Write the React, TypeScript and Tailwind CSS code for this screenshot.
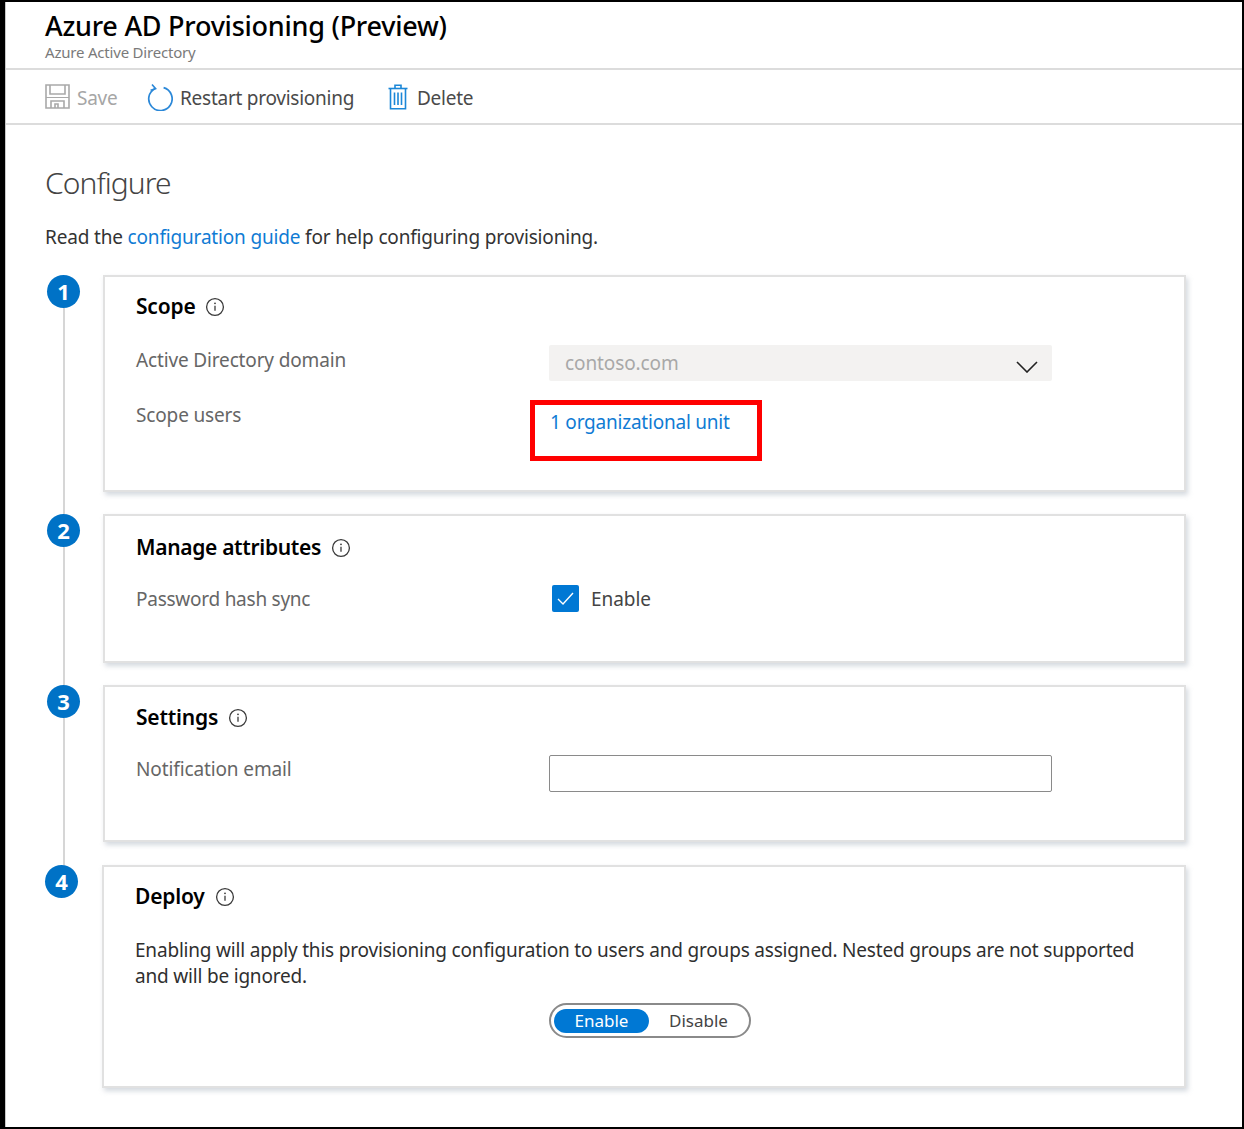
import React from "react";

const InfoIcon = () => (
  <svg width="20" height="20" viewBox="0 0 20 20" fill="none" className="shrink-0">
    <circle cx="10" cy="10" r="8.4" stroke="#3a3a3a" strokeWidth="1.3" />
    <path d="M10 8.8v5" stroke="#3a3a3a" strokeWidth="1.3" />
    <circle cx="10" cy="6.3" r="0.9" fill="#3a3a3a" />
  </svg>
);

const SaveIcon = () => (
  <svg width="25" height="25" viewBox="0 0 25 25" fill="none" stroke="#a9a9a9" strokeWidth="1.6">
    <path d="M1 1h23v23H1z" />
    <path d="M5 1v9h15V1" />
    <path d="M1 13.5h23" strokeWidth="1" />
    <path d="M6 24v-7h13v7" />
    <path d="M10 24v-4h3v4" />
  </svg>
);

const RestartIcon = () => (
  <svg width="26" height="28" viewBox="0 0 26 28" fill="none" stroke="#2b88d8" strokeWidth="1.7">
    <path d="M8.2 5.4A11.7 11.7 0 1 0 16.6 4.6" />
    <path d="M5 1.5l3.6 4.2-5 1.6" strokeWidth="1.6" />
  </svg>
);

const TrashIcon = () => (
  <svg width="20" height="26" viewBox="0 0 20 26" fill="none" stroke="#1b87d8" strokeWidth="1.6">
    <path d="M0.5 4.5h19" />
    <path d="M7 4.5V1.2h6v3.3" />
    <path d="M2.5 4.5v20.3h15V4.5" />
    <path d="M6.5 8.5v12.5M10 8.5v12.5M13.5 8.5v12.5" />
  </svg>
);

const Step = ({
  n,
  title,
  last,
  circleClass,
  cardClass,
  gapClass,
  headClass,
  titleClass,
  children,
}: {
  n: number;
  title: string;
  last?: boolean;
  circleClass: string;
  cardClass: string;
  gapClass: string;
  headClass: string;
  titleClass: string;
  children: React.ReactNode;
}) => (
  <div className="flex">
    <div className={`flex flex-col items-center w-[33px] shrink-0 ${circleClass}`}>
      <div className="w-[33px] h-[33px] rounded-full bg-[#0072c6] text-white font-bold text-[22px] leading-[32px] text-center">
        {n}
      </div>
      {!last && <div className="flex-1 w-[2px] bg-[#d6d6d6]" />}
    </div>
    <div className={`flex-1 ${gapClass}`}>
      <div className={`bg-white border-2 border-[#e1e1e1] shadow-[2px_3px_5px_rgba(160,170,185,0.45)] pl-[31px] ${cardClass}`}>
        <div className={`flex items-center gap-[10px] h-[32px] ${headClass}`}>
          <h2 className={`text-[21px] font-semibold text-black ${titleClass}`}>{title}</h2>
          <InfoIcon />
        </div>
        {children}
      </div>
    </div>
  </div>
);

export default function App() {
  return (
    <div
      className="h-[1129px] bg-white border-t-2 border-b-2 border-r-2 border-l-[5px] border-black overflow-hidden"
      style={{ fontFamily: '"Noto Sans", "Open Sans", sans-serif' }}
    >
      <div className="h-full border-l border-[#c8c8c8]">
        {/* Header */}
        <div className="h-[68px] border-b-2 border-[#dcdcdc] pl-[39px] pt-[5px]">
          <h1 className="text-[27px] leading-[37px] font-medium text-black tracking-[-0.25px]">
            Azure AD Provisioning (Preview)
          </h1>
          <div className="text-[15px] leading-[16px] text-[#7a7a7a] tracking-[-0.2px]">Azure Active Directory</div>
        </div>

        {/* Toolbar */}
        <div className="h-[55px] border-b-2 border-[#dcdcdc] pl-[39px] flex items-center text-[19px] tracking-[-0.25px]">
          <div className="flex items-center gap-[7px] text-[#a6a6a6] w-[102px]">
            <SaveIcon />
            <span className="mt-[4px]">Save</span>
          </div>
          <div className="flex items-center gap-[7px] text-[#4a4a4a] w-[241px]">
            <RestartIcon />
            <span className="mt-[4px]">Restart provisioning</span>
          </div>
          <div className="flex items-center gap-[9px] text-[#4a4a4a]">
            <TrashIcon />
            <span className="mt-[4px]">Delete</span>
          </div>
        </div>

        {/* Content */}
        <div className="pl-[39px] pr-[56px]">
          <h2 className="text-[30px] leading-[40px] font-light text-[#444444] mt-[38px] tracking-[-0.95px]">Configure</h2>
          <p className="text-[19px] leading-[28px] text-[#333333] mt-[20px] mb-[24px] tracking-[-0.17px]">
            Read the <a className="text-[#0f7bd4]">configuration guide</a> for help configuring provisioning.
          </p>

          <div className="ml-px">
            <Step
              n={1}
              title="Scope"
              circleClass="ml-[1px]"
              cardClass="ml-[23px] h-[217px]"
              gapClass="pb-[22px]"
              headClass="mt-[14px]"
              titleClass="tracking-[-0.2px]"
            >
              <div className="grid grid-cols-[413px_503px] mt-[22px]">
                <div className="text-[19px] leading-[28px] text-[#666666] tracking-[-0.15px] pt-[1px]">Active Directory domain</div>
                <div className="h-[36px] bg-[#f3f2f1] rounded-[2px] flex items-center justify-between pl-[16px] pr-[14px] text-[19px] text-[#a8a8a8] tracking-[-0.1px]">
                  <span className="mt-[1px]">contoso.com</span>
                  <svg width="22" height="12" viewBox="0 0 22 12" fill="none" stroke="#222222" strokeWidth="1.6" className="mt-[8px]">
                    <path d="M1 1l10 10L21 1" />
                  </svg>
                </div>
                <div className="text-[19px] leading-[28px] text-[#666666] tracking-[-0.15px] mt-[20px]">Scope users</div>
                <div className="mt-[19px] -ml-[19px] w-[232px] h-[61px] border-[5px] border-[#ff0000] pl-[15px] pt-[3px] text-[19px] leading-[28px] text-[#0f7bd4] tracking-[-0.22px]">
                  1 organizational unit
                </div>
              </div>
            </Step>

            <Step
              n={2}
              title="Manage attributes"
              circleClass="ml-[1px]"
              cardClass="ml-[23px] h-[149px]"
              gapClass="pb-[22px]"
              headClass="mt-[16px]"
              titleClass="tracking-[-0.32px]"
            >
              <div className="grid grid-cols-[416px_1fr] mt-[20px]">
                <div className="text-[19px] leading-[28px] text-[#666666] tracking-[-0.25px] pt-[1px]">Password hash sync</div>
                <div className="flex items-center gap-[12px] text-[19px] text-[#444444] tracking-[-0.05px]">
                  <div className="w-[27px] h-[27px] bg-[#0078d4] rounded-[2px] flex items-center justify-center">
                    <svg width="17" height="13" viewBox="0 0 17 13" fill="none" stroke="#ffffff" strokeWidth="1.4">
                      <path d="M1 7l5 5L16 1" />
                    </svg>
                  </div>
                  <span className="mt-[1px]">Enable</span>
                </div>
              </div>
            </Step>

            <Step
              n={3}
              title="Settings"
              circleClass="ml-[1px]"
              cardClass="ml-[23px] h-[157px]"
              gapClass="pb-[23px]"
              headClass="mt-[15px]"
              titleClass="tracking-[-0.2px]"
            >
              <div className="grid grid-cols-[413px_503px] mt-[21px]">
                <div className="text-[19px] leading-[28px] text-[#666666] tracking-[-0.12px]">Notification email</div>
                <input className="h-[37px] border border-[#8a8a8a] rounded-[2px] bg-white" />
              </div>
            </Step>

            <Step
              n={4}
              title="Deploy"
              last
              circleClass="-ml-[1px]"
              cardClass="ml-[24px] h-[223px]"
              gapClass=""
              headClass="mt-[14px]"
              titleClass="tracking-[-0.2px]"
            >
              <p className="text-[19px] leading-[26px] text-[#2f2f2f] mt-[24px] w-[1020px] tracking-[-0.19px]">
                Enabling will apply this provisioning configuration to users and groups assigned. Nested groups are not
                supported and will be ignored.
              </p>
              <div className="ml-[414px] mt-[14px] w-[202px] h-[35px] rounded-full border-2 border-[#8a8a8a] flex items-center px-[3px] text-[17px]">
                <div className="w-[95px] h-[24px] rounded-full bg-[#0078d4] text-white text-center leading-[24px]">Enable</div>
                <div className="flex-1 text-center text-[#444444] pl-[2px]">Disable</div>
              </div>
            </Step>
          </div>
        </div>
      </div>
    </div>
  );
}
